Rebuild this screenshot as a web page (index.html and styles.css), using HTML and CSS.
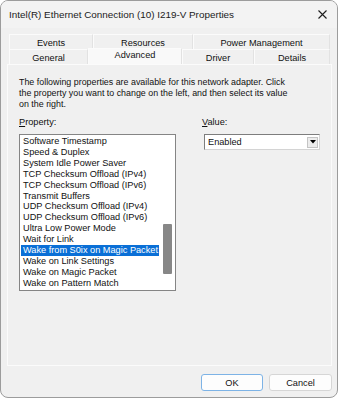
FILE: index.html
```html
<!DOCTYPE html>
<html>
<head>
<meta charset="utf-8">
<link rel="stylesheet" href="styles.css">
</head>
<body>
<div class="window">
  <div class="titlebar">
    <span class="title">Intel(R) Ethernet Connection (10) I219-V Properties</span>
    <svg class="close" width="9" height="9" viewBox="0 0 9 9"><path d="M0.5 0.5 L8.5 8.5 M8.5 0.5 L0.5 8.5" stroke="#1e1e1e" stroke-width="1.1" fill="none"/></svg>
  </div>
  <div class="tabs">
    <div class="tab-row">
      <div class="tab w-events">Events</div>
      <div class="tab w-resources">Resources</div>
      <div class="tab w-power">Power Management</div>
    </div>
    <div class="tab-row">
      <div class="tab w-general">General</div>
      <div class="tab tab-active w-advanced">Advanced</div>
      <div class="tab w-driver">Driver</div>
      <div class="tab w-details">Details</div>
    </div>
  </div>
  <div class="panel">
    <p class="desc">The following properties are available for this network adapter. Click<br>the property you want to change on the left, and then select its value<br>on the right.</p>
    <div class="fields">
      <div class="col-left">
        <div class="label"><u>P</u>roperty:</div>
        <div class="listbox">
          <ul class="items">
            <li>Software Timestamp</li>
            <li>Speed &amp; Duplex</li>
            <li>System Idle Power Saver</li>
            <li>TCP Checksum Offload (IPv4)</li>
            <li>TCP Checksum Offload (IPv6)</li>
            <li>Transmit Buffers</li>
            <li>UDP Checksum Offload (IPv4)</li>
            <li>UDP Checksum Offload (IPv6)</li>
            <li>Ultra Low Power Mode</li>
            <li>Wait for Link</li>
            <li class="selected">Wake from S0ix on Magic Packet</li>
            <li>Wake on Link Settings</li>
            <li>Wake on Magic Packet</li>
            <li>Wake on Pattern Match</li>
          </ul>
          <div class="scrollbar"><div class="thumb"></div></div>
        </div>
      </div>
      <div class="col-right">
        <div class="label"><u>V</u>alue:</div>
        <div class="combo">
          <span class="combo-text">Enabled</span>
          <span class="combo-btn"><svg width="6" height="4" viewBox="0 0 6 4"><path d="M0 0 H6 L3 3.5 Z" fill="#000"/></svg></span>
        </div>
      </div>
    </div>
  </div>
  <div class="buttons">
    <button class="btn btn-default">OK</button>
    <button class="btn">Cancel</button>
  </div>
</div>
</body>
</html>
```

FILE: styles.css
```css
* { box-sizing: border-box; }
html, body { margin: 0; padding: 0; }
body {
  width: 339px;
  height: 400px;
  background: #ffffff;
  overflow: hidden;
  font-family: "Liberation Sans", Arial, sans-serif;
  font-size: 9.2px;
  color: #111;
}
.window {
  width: 338px;
  height: 398px;
  border: 1px solid #9c9c9c;
  border-radius: 8px;
  background: #f0f0f0;
  display: flex;
  flex-direction: column;
  overflow: hidden;
}
.titlebar {
  height: 27px;
  display: flex;
  align-items: center;
  justify-content: space-between;
  padding: 0 10px 0 8px;
  background: #f3f3f3;
}
.title {
  font-size: 9.9px;
  color: #1a1a1a;
}
.close { display: block; }
.tabs {
  margin: 6px 0 0 8px;
  display: flex;
  flex-direction: column;
}
.tab-row {
  display: flex;
  height: 15px;
}
.tab {
  height: 15px;
  display: flex;
  align-items: center;
  justify-content: center;
  background: #f0f0f0;
  border-top: 1px solid #fbfbfb;
  border-left: 1px solid #fbfbfb;
  border-right: 1px solid #e2e2e2;
  padding-top: 1px;
  color: #111;
}
.tab-active {
  background: #f9f9f9;
  margin-top: -1px;
  height: 16px;
  align-items: flex-start;
  padding-top: 1px;
  border-right: 1px solid #e2e2e2;
  position: relative;
}
.w-events { width: 84px; }
.w-resources { width: 100px; }
.w-power { width: 137px; }
.w-general { width: 79px; }
.w-advanced { width: 94px; }
.w-driver { width: 72px; }
.w-details { width: 76px; }
.panel {
  margin: 0 0 0 6px;
  width: 325px;
  height: 302px;
  border: 1px solid #fbfbfb;
  background: #f0f0f0;
  padding: 12px 11px 0 11px;
}
.desc {
  margin: 0;
  line-height: 11px;
  font-size: 8.9px;
}
.fields {
  display: flex;
  margin-top: 7px;
}
.label {
  line-height: 11px;
  height: 11px;
  margin-bottom: 6px;
}
.col-left { width: 157px; }
.col-right { margin-left: 26px; }
.listbox {
  width: 157px;
  height: 157px;
  border: 1px solid #858585;
  background: #fff;
  display: flex;
}
.items {
  list-style: none;
  margin: 0;
  padding: 1px 0 0 0;
  width: 141px;
}
.items li {
  line-height: 10.92px;
  height: 10.92px;
  margin: 0 2px 0 1px;
  padding-left: 2px;
  white-space: nowrap;
}
.items li.selected {
  background: #0a6fd6;
  color: #fff;
}
.scrollbar {
  width: 14px;
  padding: 89px 2px 0 2px;
}
.thumb {
  width: 9px;
  height: 50px;
  background: #878787;
  border-radius: 1px;
}
.combo {
  margin-left: 2px;
  width: 116px;
  height: 16px;
  background: #fff;
  border-top: 1px solid #7d7d7d;
  border-left: 1px solid #7d7d7d;
  border-right: 1px solid #d4d4d4;
  border-bottom: 1px solid #d4d4d4;
  display: flex;
  align-items: center;
  justify-content: space-between;
  padding: 0 1px 0 3px;
}
.combo-btn {
  width: 11px;
  height: 11px;
  background: #ececec;
  border: 1px solid #c4c4c4;
  display: flex;
  align-items: center;
  justify-content: center;
}
.combo-btn svg { display: block; }
.buttons {
  display: flex;
  justify-content: flex-end;
  gap: 6px;
  margin: 8px 5px 0 0;
}
.btn {
  font-family: "Liberation Sans", Arial, sans-serif;
  font-size: 9.2px;
  color: #111;
  height: 17px;
  width: 63px;
  padding: 0;
  background: #fdfdfd;
  border: 1px solid #d6d6d6;
  border-radius: 3px;
}
.btn-default {
  width: 62px;
  border-color: #7db3e6;
}
```
